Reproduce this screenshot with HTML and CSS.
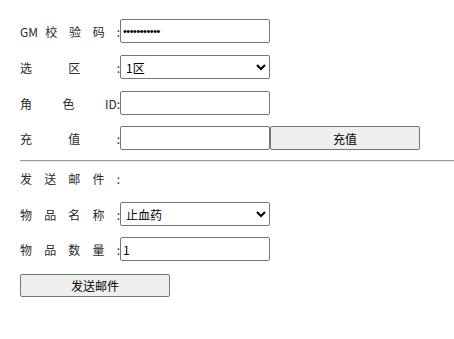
FILE: index.html
```html
<!DOCTYPE html>
<html>
<head>
<meta charset="utf-8">
<link rel="stylesheet" href="styles.css">
</head>
<body>
<div class="page">
  <div class="row"><span class="lbl">GM 校 验 码 :</span><input class="field pw" type="password" value="12345678901"></div>
  <div class="row"><span class="lbl">选 区 :</span><select class="field"><option>1区</option></select></div>
  <div class="row r3"><span class="lbl">角 色 ID:</span><input class="field" type="text"></div>
  <div class="row"><span class="lbl">充 值 :</span><input class="field" type="text"><button class="btn">充值</button></div>
  <hr class="sep">
  <div class="row"><span class="lbl">发 送 邮 件 :</span></div>
  <div class="row r7"><span class="lbl">物 品 名 称 :</span><select class="field"><option>止血药</option></select></div>
  <div class="row"><span class="lbl">物 品 数 量 :</span><input class="field" type="text" value="1"></div>
  <div class="row"><button class="btn send">发送邮件</button></div>
</div>
</body>
</html>
```

FILE: styles.css
```css
html, body {
  margin: 0;
  padding: 0;
  background: #fff;
}
body {
  font-family: "Noto Sans CJK SC", "Noto Sans", sans-serif;
  font-size: 12px;
  color: #2a2a2a;
}
.page {
  padding: 19px 0 0 20px;
}
.row {
  display: flex;
  align-items: center;
  height: 24px;
  margin-bottom: 12px;
}
.row.r3 {
  margin-bottom: 11px;
}
.row.r7 {
  margin-bottom: 11px;
}
.lbl {
  width: 100px;
  text-align: justify;
  text-align-last: justify;
  white-space: nowrap;
}
.field {
  box-sizing: border-box;
  width: 150px;
  height: 24px;
  margin: 0;
  border: 1px solid #767676;
  border-radius: 2px;
  padding: 1px 2px;
  font-family: "Noto Sans CJK SC", sans-serif;
  font-size: 12px;
  color: #000;
  background: #fff;
}
.field.pw {
  font-family: "Liberation Sans", sans-serif;
  font-size: 11px;
  letter-spacing: -0.5px;
}
select.field {
  padding: 0 0 0 1px;
}
.btn {
  box-sizing: border-box;
  width: 150px;
  height: 24px;
  margin: 0;
  border: 1px solid #767676;
  border-radius: 2px;
  background: #efefef;
  font-family: "Noto Sans CJK SC", sans-serif;
  font-size: 12px;
  color: #000;
}
.btn.send {
  height: 23px;
}
.sep {
  margin: -2px 0 4px 0;
  border: 0;
  border-top: 1px solid #9a9a9a;
  border-bottom: 1px solid #eee;
  height: 0;
}
```
